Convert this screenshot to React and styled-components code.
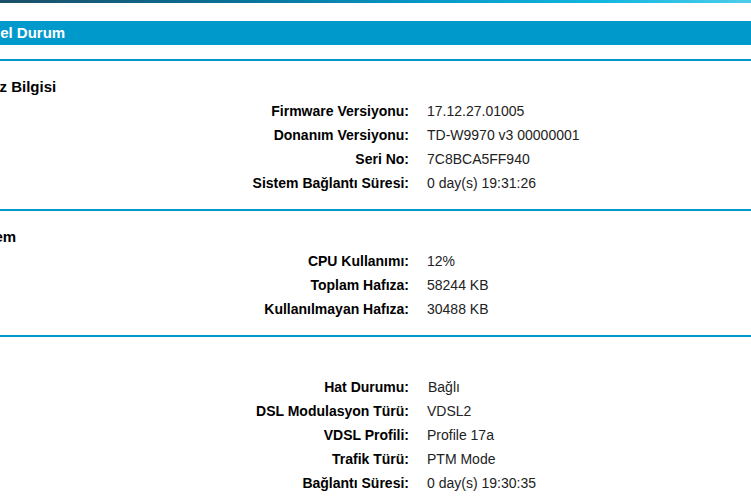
import React from "react";
import styled, { createGlobalStyle } from "styled-components";

const Global = createGlobalStyle`
  html, body { margin: 0; padding: 0; background: #fff; overflow: hidden; }
  body { font-family: "Liberation Sans", Arial, sans-serif; color: #000; }
`;

const TopStrip = styled.div`
  height: 3px;
  background: linear-gradient(to right, #1c4f68 0%, #0a6f95 30%, #0796c4 55%, #12b6df 80%, #4ecdea 100%);
`;

const Page = styled.div`
  margin-left: -33px;
  padding-top: 18px;
`;

const TitleBar = styled.div`
  height: 24px;
  background: #0099cc;
  color: #fff;
  font-size: 15px;
  font-weight: bold;
  line-height: 24px;
  padding-left: 4px;
  margin-bottom: 14px;
`;

const Section = styled.section`
  border-top: 2px solid #0099cc;
  padding: 14px 0;
`;

const Heading = styled.h3`
  margin: 0;
  font-size: 15px;
  font-weight: bold;
  line-height: 24px;
  height: 24px;
`;

const Rows = styled.div`
  display: grid;
  grid-template-columns: 442px auto;
  column-gap: 18px;
  justify-content: start;
`;

const Label = styled.div`
  text-align: right;
  font-weight: bold;
  font-size: 14px;
  line-height: 24px;
  color: #000;
`;

const Value = styled.div`
  font-size: 14px;
  line-height: 24px;
  color: #222;
  padding-left: ${(p) => (p.$indent ? "1px" : "0")};
`;

const sections = [
  {
    title: "Cihaz Bilgisi",
    rows: [
      ["Firmware Versiyonu:", "17.12.27.01005"],
      ["Donanım Versiyonu:", "TD-W9970 v3 00000001"],
      ["Seri No:", "7C8BCA5FF940"],
      ["Sistem Bağlantı Süresi:", "0 day(s) 19:31:26"],
    ],
  },
  {
    title: "Sistem",
    rows: [
      ["CPU Kullanımı:", "12%"],
      ["Toplam Hafıza:", "58244 KB"],
      ["Kullanılmayan Hafıza:", "30488 KB"],
    ],
  },
  {
    title: "DSL",
    rows: [
      ["Hat Durumu:", "Bağlı", true],
      ["DSL Modulasyon Türü:", "VDSL2"],
      ["VDSL Profili:", "Profile 17a"],
      ["Trafik Türü:", "PTM Mode"],
      ["Bağlantı Süresi:", "0 day(s) 19:30:35"],
    ],
  },
];

export default function App() {
  return (
    <>
      <Global />
      <TopStrip />
      <Page>
        <TitleBar>Genel Durum</TitleBar>
        {sections.map((s) => (
          <Section key={s.title}>
            <Heading>{s.title}</Heading>
            <Rows>
              {s.rows.map(([l, v, ind]) => (
                <React.Fragment key={l}>
                  <Label>{l}</Label>
                  <Value $indent={ind}>{v}</Value>
                </React.Fragment>
              ))}
            </Rows>
          </Section>
        ))}
      </Page>
    </>
  );
}
